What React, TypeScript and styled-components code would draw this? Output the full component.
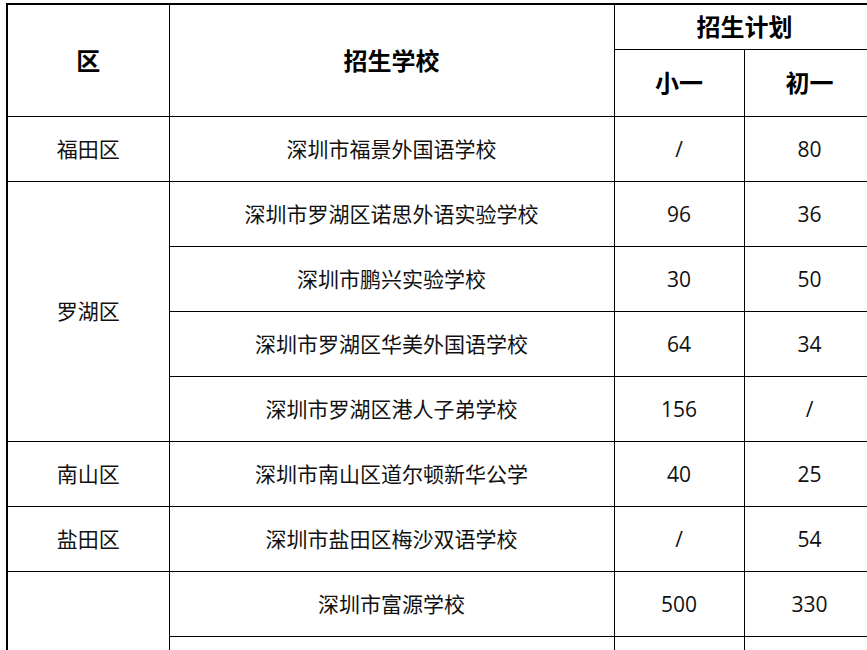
import React from "react";
import styled, { createGlobalStyle } from "styled-components";

const GlobalStyle = createGlobalStyle`
  html, body {
    margin: 0;
    padding: 0;
    background: #fff;
    overflow: hidden;
  }
  body {
    padding: 3px 0 0 6px;
    font-family: "Open Sans", "Noto Sans CJK SC", sans-serif;
    color: #111;
  }
`;

const Table = styled.table`
  border-collapse: collapse;
  table-layout: fixed;
  width: 868px;
  border-top: 2px solid #000;
  border-left: 2px solid #000;
`;

const Col = styled.col<{ $w: number }>`
  width: ${(p) => p.$w}px;
`;

const HeadCell = styled.th<{ $h: number }>`
  height: ${(p) => p.$h}px;
  padding: 0;
  border: 1px solid #000;
  font-size: 24px;
  font-weight: 700;
  color: #000;
  text-align: center;
  vertical-align: middle;
  line-height: 1;
`;

const Cell = styled.td`
  height: 64px;
  padding: 0;
  border: 1px solid #000;
  font-size: 21px;
  text-align: center;
  vertical-align: middle;
  line-height: 1;
`;

type Row = { district?: string; span?: number; school: string; primary: string; junior: string };

const rows: Row[] = [
  { district: "福田区", span: 1, school: "深圳市福景外国语学校", primary: "/", junior: "80" },
  { district: "罗湖区", span: 4, school: "深圳市罗湖区诺思外语实验学校", primary: "96", junior: "36" },
  { school: "深圳市鹏兴实验学校", primary: "30", junior: "50" },
  { school: "深圳市罗湖区华美外国语学校", primary: "64", junior: "34" },
  { school: "深圳市罗湖区港人子弟学校", primary: "156", junior: "/" },
  { district: "南山区", span: 1, school: "深圳市南山区道尔顿新华公学", primary: "40", junior: "25" },
  { district: "盐田区", span: 1, school: "深圳市盐田区梅沙双语学校", primary: "/", junior: "54" },
  { district: " ", span: 2, school: "深圳市富源学校", primary: "500", junior: "330" },
  { school: "", primary: "", junior: "" },
];

export default function App() {
  return (
    <>
      <GlobalStyle />
      <Table>
        <colgroup>
          <Col $w={162} />
          <Col $w={445} />
          <Col $w={130} />
          <Col $w={131} />
        </colgroup>
        <thead>
          <tr>
            <HeadCell $h={44} rowSpan={2}>区</HeadCell>
            <HeadCell $h={44} rowSpan={2}>招生学校</HeadCell>
            <HeadCell $h={44} colSpan={2}>招生计划</HeadCell>
          </tr>
          <tr>
            <HeadCell $h={66}>小一</HeadCell>
            <HeadCell $h={66}>初一</HeadCell>
          </tr>
        </thead>
        <tbody>
          {rows.map((r, i) => (
            <tr key={i}>
              {r.district && <Cell rowSpan={r.span}>{r.district}</Cell>}
              <Cell>{r.school}</Cell>
              <Cell>{r.primary}</Cell>
              <Cell>{r.junior}</Cell>
            </tr>
          ))}
        </tbody>
      </Table>
    </>
  );
}
